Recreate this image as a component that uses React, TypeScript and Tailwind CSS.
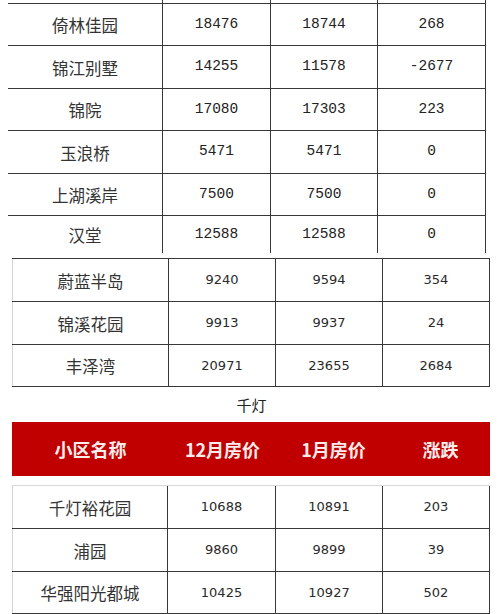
import React from 'react';

type Row = [string, string, string, string];

const topRows: Row[] = [
  ['倚林佳园', '18476', '18744', '268'],
  ['锦江别墅', '14255', '11578', '-2677'],
  ['锦院', '17080', '17303', '223'],
  ['玉浪桥', '5471', '5471', '0'],
  ['上湖溪岸', '7500', '7500', '0'],
  ['汉堂', '12588', '12588', '0'],
];
const topHeights = ['h-[42px]', 'h-[43px]', 'h-[42px]', 'h-[43px]', 'h-[42px]', 'h-[38px]'];

const midRows: Row[] = [
  ['蔚蓝半岛', '9240', '9594', '354'],
  ['锦溪花园', '9913', '9937', '24'],
  ['丰泽湾', '20971', '23655', '2684'],
];
const midHeights = ['h-[43px]', 'h-[43px]', 'h-[42px]'];

const qiandengRows: Row[] = [
  ['千灯裕花园', '10688', '10891', '203'],
  ['浦园', '9860', '9899', '39'],
  ['华强阳光都城', '10425', '10927', '502'],
];
const bottomHeights = ['h-[42px]', 'h-[43px]', 'h-[42px]'];

const cjk = "font-['Noto_Sans_CJK_SC',sans-serif]";

function Cell({ children, num, mono, first, lightLeft }: { children: React.ReactNode; num?: boolean; mono?: boolean; first?: boolean; lightLeft?: boolean }) {
  const font = num
    ? mono
      ? "font-['Liberation_Mono',monospace] text-[14.5px] text-[#222]"
      : "font-['DejaVu_Sans',sans-serif] text-[13px] text-[#2a2a2a]"
    : `${cjk} text-[16.5px] text-[#333] pt-[2px]`;
  return (
    <div
      className={`flex items-center justify-center border-r border-[#383838] ${font} ${
        first && lightLeft ? 'border-l border-l-[#d4d4d4]' : ''
      }`}
    >
      {children}
    </div>
  );
}

export default function App() {
  return (
    <div className="w-[499px] h-[614px] overflow-hidden bg-white">
      {/* first table, cut off at the top */}
      <div className="ml-[8px] w-[478px]">
        <div className="grid h-[3px] grid-cols-[155px_108px_107px_108px]">
          <div className="border-r border-[#383838]" />
          <div className="border-r border-[#383838]" />
          <div className="border-r border-[#383838]" />
          <div className="border-r border-[#383838]" />
        </div>
        {topRows.map((r, i) => (
          <div key={r[0]} className={`grid grid-cols-[155px_108px_107px_108px] border-t border-[#383838] ${topHeights[i]}`}>
            <Cell>{r[0]}</Cell>
            <Cell num mono>{r[1]}</Cell>
            <Cell num mono>{r[2]}</Cell>
            <Cell num mono>{r[3]}</Cell>
          </div>
        ))}
      </div>

      {/* second table */}
      <div className="ml-[12px] mt-[5px] w-[478px] border-b border-[#383838]">
        {midRows.map((r, i) => (
          <div key={r[0]} className={`grid grid-cols-[157px_107px_107px_107px] border-t border-[#383838] ${midHeights[i]}`}>
            <Cell first lightLeft>{r[0]}</Cell>
            <Cell num>{r[1]}</Cell>
            <Cell num>{r[2]}</Cell>
            <Cell num>{r[3]}</Cell>
          </div>
        ))}
      </div>

      <div className={`flex h-[35px] items-center justify-center pl-[4px] pt-[1px] text-[15px] text-[#222] ${cjk}`}>
        千灯
      </div>

      {/* red header */}
      <div className={`ml-[12px] grid h-[54px] w-[478px] grid-cols-[157px_107px_107px_107px] bg-[#c00000] text-[18px] font-bold text-[#fcecec] ${cjk}`}>
        <div className="flex items-center justify-center">小区名称</div>
        <div className="flex items-center justify-center">12月房价</div>
        <div className="flex items-center justify-center pl-[8px]">1月房价</div>
        <div className="flex items-center justify-center pl-[8px]">涨跌</div>
      </div>

      {/* bottom table */}
      <div className="ml-[12px] mt-[9px] w-[478px] border-t border-[#d8d8d8]">
        {qiandengRows.map((r, i) => (
          <div
            key={r[0]}
            className={`grid grid-cols-[156px_108px_107px_107px] ${i > 0 ? 'border-t border-[#383838]' : ''} ${bottomHeights[i]}`}
          >
            <Cell first lightLeft>{r[0]}</Cell>
            <Cell num>{r[1]}</Cell>
            <Cell num>{r[2]}</Cell>
            <Cell num>{r[3]}</Cell>
          </div>
        ))}
        <div className="border-t border-[#383838]" />
      </div>
    </div>
  );
}
